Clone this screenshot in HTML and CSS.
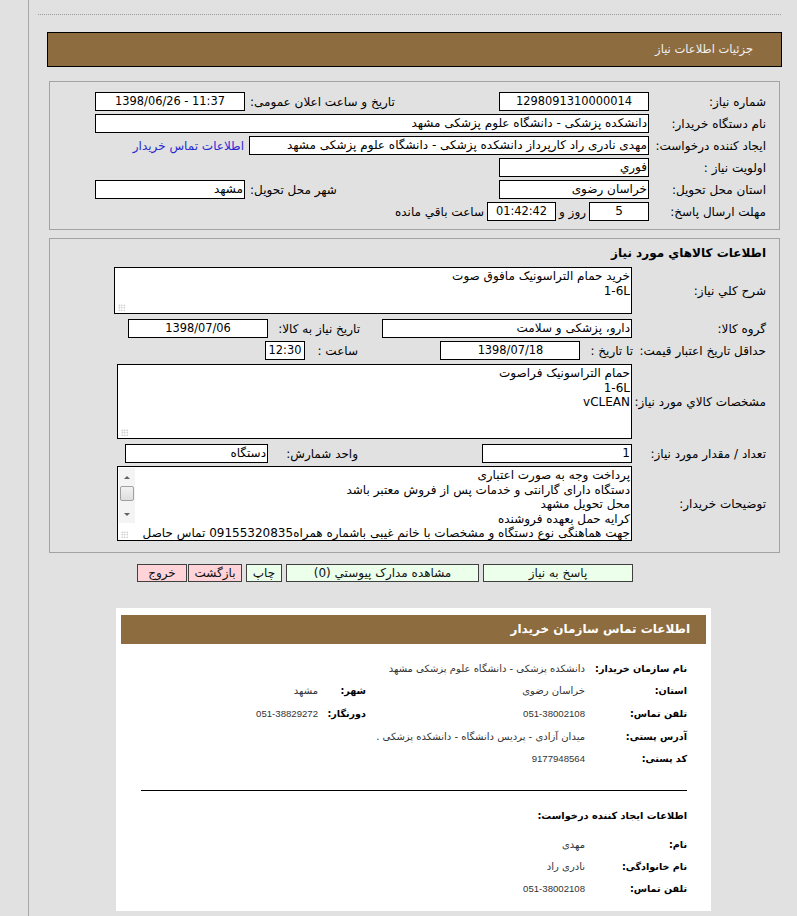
FILE: index.html
```html
<!DOCTYPE html>
<html lang="fa" dir="rtl">
<head>
<meta charset="utf-8">
<title>جزئیات اطلاعات نیاز</title>
<link rel="stylesheet" href="styles.css">
</head>
<body>
<div class="page">
  <div class="dots"></div>
  <div class="title-bar">جزئیات اطلاعات نیاز</div>

  <div class="box box-main">
    <div class="row">
      <span class="lbl">شماره نیاز:</span>
      <span class="fld w150 c n">1298091310000014</span>
      <span class="grp">
        <span>تاریخ و ساعت اعلان عمومی:</span>
        <span class="fld w150 c ltr n">1398/06/26 - 11:37</span>
      </span>
    </div>
    <div class="row">
      <span class="lbl">نام دستگاه خریدار:</span>
      <span class="fld w554">دانشکده پزشکی - دانشگاه علوم پزشکی مشهد</span>
    </div>
    <div class="row">
      <span class="lbl">ایجاد کننده درخواست:</span>
      <span class="fld w400">مهدی نادری راد کارپرداز دانشکده پزشکی - دانشگاه علوم پزشکی مشهد</span>
      <a class="link" href="#">اطلاعات تماس خریدار</a>
    </div>
    <div class="row">
      <span class="lbl">اولویت نیاز :</span>
      <span class="fld w150">فوري</span>
    </div>
    <div class="row">
      <span class="lbl">استان محل تحویل:</span>
      <span class="fld w150">خراسان رضوی</span>
      <span class="grp">
        <span>شهر محل تحویل:</span>
        <span class="fld w150">مشهد</span>
      </span>
    </div>
    <div class="row">
      <span class="lbl">مهلت ارسال پاسخ:</span>
      <span class="fld w60 c">5</span>
      <span class="txt">روز و</span>
      <span class="fld w69 c n">01:42:42</span>
      <span class="txt">ساعت باقي مانده</span>
    </div>
  </div>

  <div class="box box-goods">
    <div class="sec-title">اطلاعات كالاهاي مورد نياز</div>
    <div class="row-ta">
      <span class="lbl lbl-w">شرح کلي نياز:</span>
      <div class="ta ta-1">خرید حمام التراسونیک مافوق صوت
1-6L<span class="grip"></span></div>
    </div>
    <div class="row2">
      <span class="lbl lbl-w">گروه کالا:</span>
      <div class="col-a"><span class="fld w250">دارو، پزشکی و سلامت</span></div>
      <div class="col-b">
        <span class="sub">تاریخ نیاز به کالا:</span>
        <span class="fld w140 c n">1398/07/06</span>
      </div>
    </div>
    <div class="row2 row2-tight">
      <span class="lbl lbl-w">حداقل تاریخ اعتبار قیمت:</span>
      <div class="col-a">
        <span class="txt-to">تا تاریخ :</span>
        <span class="fld w140 c n">1398/07/18</span>
      </div>
      <div class="col-b">
        <span class="sub sub-s">ساعت :</span>
        <span class="fld w40 c n">12:30</span>
      </div>
    </div>
    <div class="row-ta">
      <span class="lbl lbl-w">مشخصات کالاي مورد نياز:</span>
      <div class="ta ta-2">حمام التراسونیک فراصوت
1-6L
vCLEAN<span class="grip"></span></div>
    </div>
    <div class="row2">
      <span class="lbl lbl-w">تعداد / مقدار مورد نیاز:</span>
      <div class="col-a"><span class="fld w150">1</span></div>
      <div class="col-b">
        <span class="sub sub-u">واحد شمارش:</span>
        <span class="fld w143">دستگاه</span>
      </div>
    </div>
    <div class="row-ta">
      <span class="lbl lbl-w">توضیحات خریدار:</span>
      <div class="ta ta-3"><div class="ta-lines">پرداخت وجه به صورت اعتباری
دستگاه دارای گارانتی و خدمات پس از فروش معتبر باشد
محل تحویل مشهد
کرایه حمل بعهده فروشنده
جهت هماهنگی نوع دستگاه و مشخصات با خانم غیبی باشماره همراه09155320835 تماس حاصل</div><div class="sbar"><span class="arr arr-up"></span><span class="thumb"></span><span class="arr arr-down"></span></div><span class="grip"></span></div>
    </div>
  </div>

  <div class="btns">
    <span class="btn btn-green w-reply">پاسخ به نیاز</span>
    <span class="btn btn-green w-docs">مشاهده مدارک پیوستي (0)</span>
    <span class="btn btn-green w-print">چاپ</span>
    <span class="pair">
      <span class="btn btn-pink w-back">بازگشت</span>
      <span class="btn btn-pink w-exit">خروج</span>
    </span>
  </div>

  <div class="panel">
    <div class="panel-head">اطلاعات تماس سازمان خریدار</div>
    <div class="info">
      <span class="k">نام سازمان خریدار:</span>
      <span class="v span3">دانشکده پزشکی - دانشگاه علوم پزشکی مشهد</span>

      <span class="k">استان:</span>
      <span class="v">خراسان رضوی</span>
      <span class="k">شهر:</span>
      <span class="v">مشهد</span>

      <span class="k">تلفن تماس:</span>
      <span class="v num">051-38002108</span>
      <span class="k">دورنگار:</span>
      <span class="v num">051-38829272</span>

      <span class="k">آدرس پستی:</span>
      <span class="v span3">میدان آزادی - پردیس دانشگاه - دانشکده پزشکی .</span>

      <span class="k">کد پستی:</span>
      <span class="v num span3">9177948564</span>
    </div>
    <div class="rule"></div>
    <div class="sub-head">اطلاعات ایجاد کننده درخواست:</div>
    <div class="info info-2">
      <span class="k">نام:</span>
      <span class="v span3">مهدی</span>
      <span class="k">نام خانوادگی:</span>
      <span class="v span3">نادری راد</span>
      <span class="k">تلفن تماس:</span>
      <span class="v num span3">051-38002108</span>
    </div>
  </div>
</div>
</body>
</html>
```

FILE: styles.css
```css
* { box-sizing: border-box; }

html, body { margin: 0; padding: 0; }

body {
  width: 797px;
  height: 916px;
  overflow: hidden;
  background: #e1e1e1;
  color: #000;
  font-family: "DejaVu Sans", sans-serif;
  font-size: 12px;
}

.page {
  margin-left: 28px;
  border-left: 1px solid #a8a8a8;
  min-height: 916px;
  padding-top: 14px;
}

.dots {
  margin: 0 16px 0 9px;
  border-top: 1px dotted #9c9c9c;
}

.title-bar {
  margin: 17px 15px 0 18px;
  height: 35px;
  background: #8d6c40;
  border: 1px solid #000;
  color: #f2f2f2;
  padding-right: 28px;
  line-height: 33px;
  font-size: 11.5px;
}

.box {
  margin: 0 17px 0 20px;
  border: 1px solid #a3a3a3;
}

.box-main {
  margin-top: 14px;
  padding: 10px 13px 5px 45px;
}

.row {
  display: flex;
  align-items: center;
  height: 19px;
  margin-bottom: 3px;
  white-space: nowrap;
}

.lbl {
  flex: none;
  width: 117px;
  white-space: nowrap;
}

.lbl-w { width: 134px; }

.fld {
  flex: none;
  display: block;
  height: 19px;
  border: 1px solid #000;
  background: #fff;
  line-height: 17px;
  padding: 0 1px;
  white-space: nowrap;
  overflow: hidden;
  text-align: right;
}

.c { text-align: center; }
.n { font-size: 11.4px; }
.ltr { direction: ltr; }
.w40 { width: 40px; }
.w60 { width: 60px; }
.w69 { width: 69px; }
.w140 { width: 140px; }
.w143 { width: 143px; }
.w150 { width: 150px; }
.w250 { width: 250px; }
.w400 { width: 400px; }
.w554 { width: 554px; }

.grp {
  margin-right: auto;
  display: flex;
  align-items: center;
  gap: 5px;
}

.link {
  margin-right: 5px;
  color: #2a2ad0;
  text-decoration: none;
}

.txt { margin: 0 3px; }

.box-goods {
  margin-top: 8px;
  padding: 6px 13px 11px 20px;
}

.sec-title {
  font-weight: bold;
  line-height: 16px;
  margin-bottom: 6px;
}

.row-ta {
  display: flex;
  align-items: center;
}

.ta {
  position: relative;
  flex: none;
  border: 1px solid #000;
  background: #fff;
  white-space: pre-line;
  line-height: 14.5px;
  padding: 0 1px;
  overflow: hidden;
}

.ta-1 { width: 518px; height: 47px; padding-top: 1px; }
.ta-2 { width: 515px; height: 75px; padding-top: 1px; }
.ta-3 { width: 515px; height: 75px; padding: 0; white-space: normal; }

.ta-lines {
  padding: 1px 1px 0 0;
  white-space: pre;
}

.grip {
  position: absolute;
  left: 3px;
  bottom: 2px;
  width: 7px;
  height: 7px;
  background-image: radial-gradient(circle, #b5b5b5 0.7px, transparent 0.9px);
  background-size: 2.5px 2.5px;
}

.sbar {
  position: absolute;
  left: 1px;
  top: 1px;
  width: 16px;
  height: 55px;
  background: #f4f4f4;
}

.arr {
  position: absolute;
  left: 5px;
  width: 0;
  height: 0;
  border-left: 3px solid transparent;
  border-right: 3px solid transparent;
}

.arr-up { top: 8px; border-bottom: 3px solid #606060; }
.arr-down { top: 45px; border-top: 3px solid #606060; }

.thumb {
  position: absolute;
  left: 1px;
  top: 18px;
  width: 14px;
  height: 15px;
  border: 1px solid #a0a0a0;
  border-radius: 2px;
  background: linear-gradient(#f2f2f2, #dedede);
}

.row2 {
  display: flex;
  align-items: center;
  height: 19px;
  margin: 5px 0 3px;
  white-space: nowrap;
}

.row2-tight { margin: 0 0 4px; }

.col-a {
  flex: none;
  width: 266px;
  display: flex;
  align-items: center;
}

.col-b {
  flex: none;
  display: flex;
  align-items: center;
}

.txt-to { margin-left: 10px; margin-right: -1px; }

.sub {
  width: 98px;
  padding-right: 6px;
}

.sub-s { width: 61px; padding-right: 8px; }
.sub-u { padding-right: 8px; }

.btns {
  display: flex;
  gap: 4px;
  margin: 11px 0 0 0;
  padding-right: 164px;
}

.btn {
  display: block;
  height: 18px;
  border: 1px solid #404040;
  line-height: 16px;
  text-align: center;
  white-space: nowrap;
  color: #111;
}

.btn-green { background: #ebffeb; }
.btn-pink { background: #ffd3d8; }

.pair { display: flex; gap: 1px; }

.w-reply { width: 150px; }
.w-docs { width: 193px; }
.w-print { width: 36px; }
.w-back { width: 54px; }
.w-exit { width: 50px; }

.panel {
  margin: 26px 86px 0 0;
  width: 595px;
  background: #fff;
  padding: 7px 5px 11px;
}

.panel-head {
  height: 29px;
  background: #8d6c40;
  color: #fff;
  font-weight: bold;
  font-size: 12px;
  line-height: 29px;
  padding-right: 16px;
}

.info {
  display: grid;
  grid-template-columns: 102px 219px 48px 1fr;
  grid-auto-rows: 22.6px;
  align-items: center;
  margin: 13px 19px 0 0;
  font-size: 10px;
}

.k { font-weight: bold; white-space: nowrap; font-size: 9.6px; }
.v { color: #333; white-space: nowrap; font-size: 10px; }
.num { font-family: "Liberation Sans", "DejaVu Sans", sans-serif; font-size: 9.6px; }
.span3 { grid-column: span 3; }

.rule {
  margin: 20px 19px 0 20px;
  border-top: 1px solid #000;
}

.sub-head {
  margin: 17px 19px 0 0;
  font-weight: bold;
  font-size: 9.8px;
  line-height: 16px;
}

.info-2 { margin-top: 10px; grid-auto-rows: 22px; }
```
